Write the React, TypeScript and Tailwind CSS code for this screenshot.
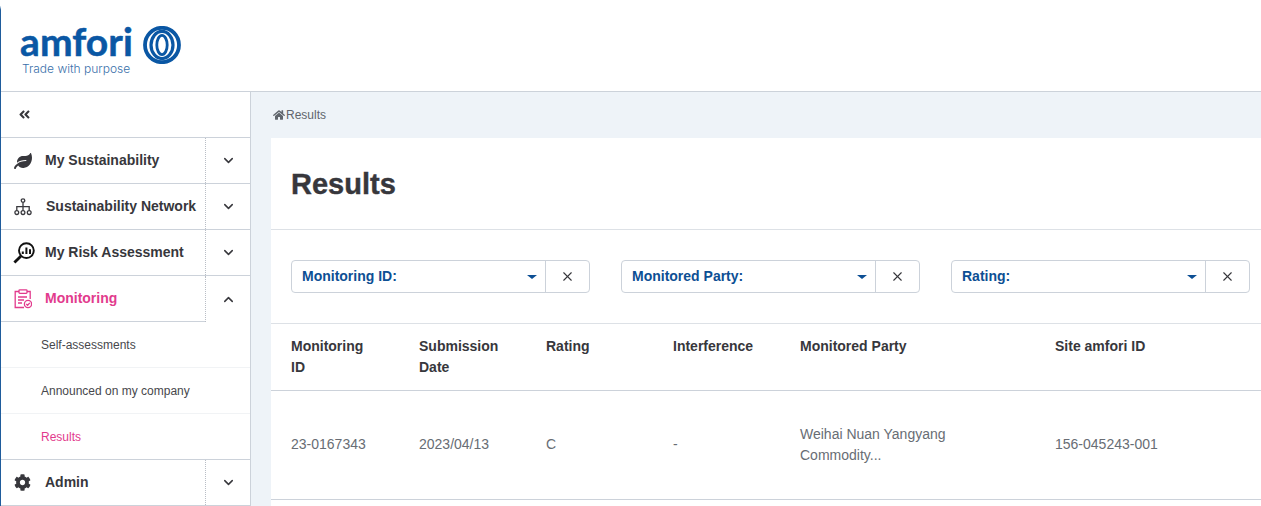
import { ChevronDown, ChevronUp, X } from "lucide-react";
import { FaAngleDoubleLeft, FaCog, FaHome, FaLeaf } from "react-icons/fa";
import type { ReactNode } from "react";

const NetworkIcon = () => (
  <svg width="18" height="18" viewBox="0 0 18 18" fill="none" stroke="#3a3a3f" strokeWidth="1.3">
    <circle cx="9" cy="2.6" r="1.8" />
    <path d="M9 4.4V12.6M2.8 12.6V8.6H15.2V12.6" />
    <circle cx="2.8" cy="14.6" r="1.9" />
    <circle cx="9" cy="14.6" r="1.9" />
    <circle cx="15.2" cy="14.6" r="1.9" />
  </svg>
);

const RiskIcon = () => (
  <svg className="-ml-[1px]" width="22" height="22" viewBox="0 0 22 22" fill="none" stroke="#111">
    <circle cx="13.4" cy="8.6" r="7.4" strokeWidth="1.9" />
    <path d="M7.8 14.2L1.4 20.6" strokeWidth="2.8" />
    <path d="M9.8 12V9.5M13.4 12V5.5M17 12V7.2" strokeWidth="2" />
  </svg>
);

const MonitorIcon = () => (
  <svg width="18" height="20" viewBox="0 0 18 20" fill="none" stroke="#e23b8d" strokeWidth="1.3">
    <path d="M5 2.5H1.2V18.5H10M13 2.5H16.2V10" />
    <rect x="5" y="0.8" width="8" height="3.6" rx="0.8" />
    <path d="M4 8H13M4 11H10M4 14H8" />
    <circle cx="14" cy="15" r="3.6" />
    <path d="M12.3 15L13.6 16.3L15.8 13.9" />
  </svg>
);

const Ring = () => (
  <svg width="38" height="38" viewBox="0 0 38 38" fill="none" stroke="#0a57a4">
    <ellipse cx="19" cy="19" rx="17" ry="17.2" strokeWidth="3.8" />
    <ellipse cx="19" cy="19" rx="11" ry="13.6" strokeWidth="3.2" />
    <ellipse cx="19" cy="19" rx="5.2" ry="9.6" strokeWidth="2.8" />
  </svg>
);

function NavRow({
  icon,
  label,
  labelClass = "text-[#37373c]",
  gap = "w-[44px]",
  open = false,
}: {
  icon: ReactNode;
  label: string;
  labelClass?: string;
  gap?: string;
  open?: boolean;
}) {
  const line = "border-b border-[#ccd2da]";
  return (
    <div className={`flex h-[46px] ${open ? "" : line}`}>
      <div className={`flex w-[204px] items-center ${open ? line : ""}`}>
        <div className={`flex ${gap} shrink-0 items-center pl-[13px]`}>{icon}</div>
        <span className={`text-[14px] font-bold ${labelClass}`}>{label}</span>
      </div>
      <div className="flex flex-1 items-center justify-center border-l border-dotted border-[#b9bec6]">
        {open ? (
          <ChevronUp size={15} strokeWidth={2.4} color="#37373c" />
        ) : (
          <ChevronDown size={15} strokeWidth={2.4} color="#37373c" />
        )}
      </div>
    </div>
  );
}

function SubRow({ label, active = false, last = false }: { label: string; active?: boolean; last?: boolean }) {
  return (
    <div
      className={`flex h-[46px] items-center pl-[40px] text-[12px] ${
        active ? "text-[#e23b8d]" : "text-[#47474c]"
      } ${last ? "border-b border-[#ccd2da]" : "border-b border-[#f1f3f5]"}`}
    >
      {label}
    </div>
  );
}

function Filter({ label }: { label: string }) {
  return (
    <div className="flex h-[33px] w-[299px] rounded-[4px] border border-[#ccd2da] bg-white">
      <div className="flex flex-1 items-center justify-between pr-[8px] pl-[10px]">
        <span className="text-[14px] font-bold text-[#0d4f94]">{label}</span>
        <span className="h-0 w-0 border-x-[5px] border-t-[4px] border-x-transparent border-t-[#0d4f94]" />
      </div>
      <div className="flex w-[44px] items-center justify-center border-l border-[#ccd2da]">
        <X size={15} strokeWidth={1.8} color="#37373c" />
      </div>
    </div>
  );
}

const columns = "grid grid-cols-[128px_127px_127px_127px_255px_1fr] pl-[20px]";

export default function App() {
  return (
    <div className="h-[506px] w-[1261px] overflow-hidden bg-white font-['Liberation_Sans',Arial,sans-serif]">
      <div className="h-full rounded-tl-[10px] border-l border-[#1f5c9c]">
        <header className="h-[92px] border-b border-[#ccd2da] bg-white pt-[20px] pl-[19px]">
          <div className="flex items-start">
            <div className="flex flex-col">
              <span className="font-['Lato',sans-serif] text-[39px] leading-[42px] font-bold tracking-[0.1px] text-[#0a57a4] [-webkit-text-stroke:0.5px_#0a57a4]">
                amfori
              </span>
              <span className="pl-[2px] font-['Inter',sans-serif] text-[12px] leading-[13px] font-light text-[#3a70aa]">
                Trade with purpose
              </span>
            </div>
            <div className="mt-[6px] ml-[10px]">
              <Ring />
            </div>
          </div>
        </header>

        <div className="flex h-[414px]">
          <aside className="w-[250px] shrink-0 border-r border-[#ccd2da] bg-white">
            <div className="flex h-[46px] items-center border-b border-[#ccd2da] pl-[17px]">
              <FaAngleDoubleLeft size={13} color="#37373c" />
            </div>
            <NavRow icon={<FaLeaf size={18} color="#37373c" />} label="My Sustainability" />
            <NavRow icon={<NetworkIcon />} label="Sustainability Network" gap="w-[45px]" />
            <NavRow icon={<RiskIcon />} label="My Risk Assessment" />
            <NavRow icon={<MonitorIcon />} label="Monitoring" labelClass="text-[#e23b8d]" open />
            <SubRow label="Self-assessments" />
            <SubRow label="Announced on my company" />
            <SubRow label="Results" active last />
            <NavRow icon={<FaCog size={17} color="#37373c" />} label="Admin" />
          </aside>

          <main className="flex-1 overflow-hidden bg-[#eef3f8] pl-[20px]">
            <div className="flex h-[46px] items-center gap-[1px] pl-[2px] text-[12px] text-[#60656c]">
              <FaHome size={12} color="#60656c" />
              <span>Results</span>
            </div>
            <section className="h-[368px] bg-white">
              <div className="flex h-[92px] items-center border-b border-[#dde1e6] pt-[3px] pl-[20px]">
                <h1 className="text-[29px] font-bold text-[#37373c] [-webkit-text-stroke:0.4px_#37373c]">Results</h1>
              </div>
              <div className="flex h-[94px] items-start gap-[31px] border-b border-[#dde1e6] pt-[30px] pl-[20px]">
                <Filter label="Monitoring ID:" />
                <Filter label="Monitored Party:" />
                <Filter label="Rating:" />
              </div>
              <div className={`${columns} h-[67px] border-b border-[#ccd2da] pt-[12px] text-[14px] leading-[21px] font-bold text-[#37373c]`}>
                <div>
                  Monitoring
                  <br />
                  ID
                </div>
                <div>
                  Submission
                  <br />
                  Date
                </div>
                <div>Rating</div>
                <div>Interference</div>
                <div>Monitored Party</div>
                <div>Site amfori ID</div>
              </div>
              <div className={`${columns} h-[109px] items-center border-b border-[#ccd2da] text-[14px] leading-[21px] text-[#686d74]`}>
                <div className="pb-[2px]">23-0167343</div>
                <div className="pb-[2px]">2023/04/13</div>
                <div className="pb-[2px]">C</div>
                <div className="pb-[2px]">-</div>
                <div>
                  Weihai Nuan Yangyang
                  <br />
                  Commodity...
                </div>
                <div className="pb-[2px]">156-045243-001</div>
              </div>
            </section>
          </main>
        </div>
      </div>
    </div>
  );
}
